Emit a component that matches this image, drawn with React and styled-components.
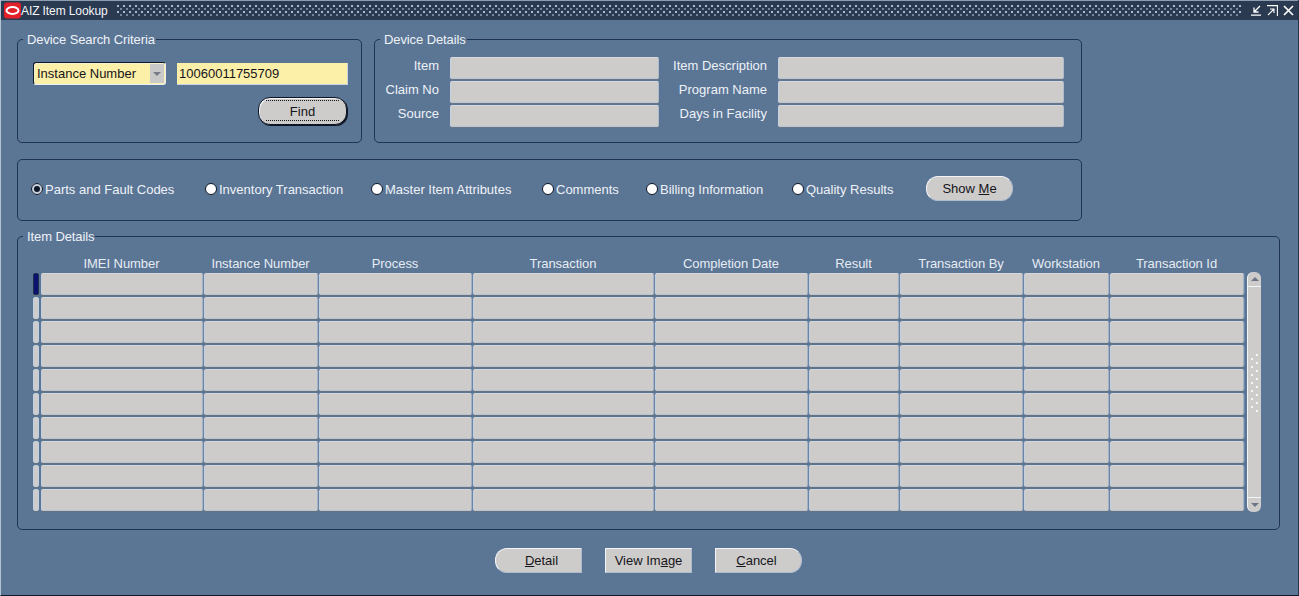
import React from 'react';
import styled, { createGlobalStyle } from 'styled-components';

const GlobalStyle = createGlobalStyle`
  html, body {
    margin: 0;
    padding: 0;
    background: #5b7595;
  }
  body {
    font-family: "Liberation Sans", Arial, sans-serif;
    font-size: 13px;
  }
`;

const Window = styled.div`
  box-sizing: border-box;
  width: 1299px;
  height: 596px;
  background: #5b7595;
  border-left: 1px solid #b4c2d4;
  border-right: 1px solid #24344c;
  border-bottom: 1px solid #0c1830;
  display: flex;
  flex-direction: column;
  overflow: hidden;
`;

const TitleBar = styled.div`
  height: 20px;
  flex: none;
  background: #2a3a50;
  border-top: 1px solid #8f9db0;
  box-sizing: border-box;
  display: flex;
  align-items: center;
  color: #f4f6f9;
`;

const Logo = styled.svg`
  width: 17px;
  height: 17px;
  margin-left: 3px;
  flex: none;
`;

const Title = styled.span`
  font-size: 12px;
  letter-spacing: -0.1px;
  width: 96px;
  white-space: nowrap;
`;

const Dots = styled.div`
  width: 1124px;
  height: 13px;
  background-image:
    radial-gradient(circle at 1px 1px, #aebcd0 0.7px, transparent 1px),
    radial-gradient(circle at 1px 1px, #76889f 0.7px, transparent 1px);
  background-size: 6px 6px;
  background-position: 0 1px, 3px 4px;
`;

const WindowIcons = styled.div`
  display: flex;
  gap: 5px;
  margin-left: 10px;
  align-items: center;
`;

const Content = styled.div`
  padding: 19px 0 0 16px;
  display: flex;
  flex-direction: column;
  align-items: flex-start;
`;

const TopRow = styled.div`
  display: flex;
  gap: 12px;
`;

const Panel = styled.section`
  position: relative;
  box-sizing: border-box;
  width: ${(p) => p.$width}px;
  height: ${(p) => p.$height}px;
  border: 1px solid #1f3450;
  border-radius: 5px;
  margin-top: ${(p) => p.$top || 0}px;
`;

const Legend = styled.span`
  position: absolute;
  top: -8px;
  left: 5px;
  padding: 0 1px 0 4px;
  background: #5b7595;
  color: #eef2f7;
  letter-spacing: -0.1px;
  line-height: 15px;
  white-space: nowrap;
`;

const SearchBody = styled.div`
  padding: 22px 14px 0 15px;
  display: flex;
  flex-direction: column;
  align-items: flex-end;
`;

const SearchRow = styled.div`
  display: flex;
  gap: 11px;
  align-self: stretch;
  align-items: flex-end;
`;

const Select = styled.div`
  box-sizing: border-box;
  flex: none;
  width: 133px;
  height: 23px;
  background: #fcefa8;
  border: 1px solid #e8eef5;
  border-top-color: #0f1c30;
  border-left-color: #0f1c30;
  border-radius: 3px;
  display: flex;
  align-items: center;
  padding-left: 3px;
  color: #15151a;
  box-shadow: inset 1px 1px 0 #f6f0cc;
`;

const SelectText = styled.span`
  flex: 1;
`;

const SelectArrow = styled.span`
  width: 14px;
  height: 19px;
  margin-right: 1px;
  background: #c9c9c9;
  display: flex;
  align-items: center;
  justify-content: center;
  &::before {
    content: '';
    border-left: 4px solid transparent;
    border-right: 4px solid transparent;
    border-top: 4px solid #767c86;
  }
`;

const TextInput = styled.div`
  box-sizing: border-box;
  flex: none;
  width: 171px;
  height: 22px;
  padding-left: 2px;
  background: #fcefa8;
  border-right: 1px solid #c6d2e0;
  border-bottom: 1px solid #c6d2e0;
  color: #15151a;
  line-height: 21px;
`;

const Button = styled.div`
  box-sizing: border-box;
  width: ${(p) => p.$width || 87}px;
  height: ${(p) => p.$height || 25}px;
  padding: ${(p) => p.$pad || '0'};
  display: flex;
  align-items: center;
  justify-content: center;
  background: #cdcccb;
  color: #15151a;
  border-top: 1px solid #f2f4f7;
  border-left: 1px solid #f2f4f7;
  border-bottom: 1px solid #aebccd;
  border-right: 1px solid #aebccd;
  border-radius: ${(p) => p.$radius || '12px'};
`;

const FindButton = styled(Button)`
  position: relative;
  margin-top: 12px;
  border: 1px solid #0e1422;
  border-radius: 12px;
  box-shadow: 1px 1px 0 #0e1422, inset 1px 1px 0 #f2f4f7;
  &::after {
    content: '';
    position: absolute;
    inset: 2px 7px 3px;
    border-top: 1px dotted #15151a;
    border-bottom: 1px dotted #15151a;
  }
`;

const DetailsGrid = styled.div`
  padding-top: 17px;
  display: grid;
  grid-template-columns: 64px 209px 97px 286px;
  grid-auto-rows: 22px;
  column-gap: 11px;
  row-gap: 2px;
`;

const FieldLabel = styled.label`
  color: #eef2f7;
  text-align: right;
  line-height: 17px;
  white-space: nowrap;
`;

const ReadField = styled.div`
  background: #cdcccb;
  border-top: 1px solid #d8d8d8;
  border-left: 1px solid #c6d2e0;
  border-right: 1px solid #aebccd;
  border-bottom: 1px solid #b7c5d6;
  border-radius: 2px;
  box-sizing: border-box;
  box-shadow: 0 1px 0 #6d7686;
`;

const RadioGrid = styled.div`
  display: grid;
  grid-template-columns: 174px 166px 171px 104px 146px 134px 87px;
  height: 100%;
  padding-left: 13px;
  align-items: center;
  box-sizing: border-box;
  padding-bottom: 4px;
`;

const RadioItem = styled.div`
  display: flex;
  align-items: center;
  color: #eef2f7;
  white-space: nowrap;
  padding-top: 2px;
`;

const RadioDot = styled.span`
  box-sizing: border-box;
  width: 12px;
  height: 12px;
  margin-right: 2px;
  border-radius: 50%;
  background: ${(p) => (p.$checked ? '#0c1626' : '#ffffff')};
  border: ${(p) => (p.$checked ? '3px solid #c6cfda' : '1px solid #0c1626')};
  outline: ${(p) => (p.$checked ? '1px solid #0c1626' : 'none')};
  outline-offset: -1px;
`;

const TableWrap = styled.div`
  display: flex;
  padding: 18px 0 0 15px;
`;

const TableGrid = styled.div`
  display: grid;
  grid-template-columns: 7px 162px 114px 153px 181px 153px 90px 123px 85px 134px;
  grid-template-rows: 16px repeat(10, 22px);
  column-gap: 1px;
  row-gap: 2px;
`;

const HeaderCell = styled.div`
  color: #e6ecf3;
  text-align: center;
  letter-spacing: -0.05px;
  line-height: 17px;
  padding-right: 1px;
  white-space: nowrap;
`;

const Cell = styled.div`
  box-sizing: border-box;
  background: #cdcccb;
  border-top: 1px solid #d6d6d6;
  border-left: 1px solid #c3d0df;
  border-right: 1px solid #a3b2c5;
  border-bottom: 1px solid #b7c5d6;
  border-radius: 2px;
  box-shadow: 0 1px 0 #67727f, 1px 0 0 #6d85a5;
`;

const RowMark = styled.div`
  box-sizing: border-box;
  margin-right: 1px;
  background: ${(p) => (p.$active ? '#0a1470' : '#cdcccb')};
  border: 1px solid ${(p) => (p.$active ? '#22304e' : '#c3d0df')};
  border-radius: 2px;
  box-shadow: 0 1px 0 #67727f;
`;

const Scrollbar = styled.div`
  width: 14px;
  height: 240px;
  margin-left: 3px;
  margin-top: 17px;
  background: #cdcccb;
  border-left: 1px solid #f2f4f7;
  border-radius: 6px;
  box-sizing: border-box;
  display: flex;
  flex-direction: column;
  justify-content: space-between;
  align-items: stretch;
`;

const ScrollEnd = styled.div`
  height: 14px;
  display: flex;
  align-items: center;
  justify-content: center;
  border-${(p) => (p.$down ? 'top' : 'bottom')}: 1px solid #f2f4f7;
  &::before {
    content: '';
    border-left: 4px solid transparent;
    border-right: 4px solid transparent;
    border-${(p) => (p.$down ? 'top' : 'bottom')}: 4px solid #6d7686;
  }
`;

const ScrollGrip = styled.div`
  width: 8px;
  height: 60px;
  margin: 0 0 16px 3px;
  background-image:
    radial-gradient(circle at 1px 1px, #f4f6f9 1px, transparent 1.2px),
    radial-gradient(circle at 1px 1px, #f4f6f9 1px, transparent 1.2px);
  background-size: 10px 8px;
  background-position: 0 4px, 5px 0;
`;

const ButtonRow = styled.div`
  display: flex;
  gap: 23px;
  margin: 18px 0 0 478px;
`;

const columns = [
  'IMEI Number',
  'Instance Number',
  'Process',
  'Transaction',
  'Completion Date',
  'Result',
  'Transaction By',
  'Workstation',
  'Transaction Id',
];

const radios = [
  'Parts and Fault Codes',
  'Inventory Transaction',
  'Master Item Attributes',
  'Comments',
  'Billing Information',
  'Quality Results',
];

const rows = Array.from({ length: 10 }, (_, i) => i);

const details = [
  ['Item', 'Item Description'],
  ['Claim No', 'Program Name'],
  ['Source', 'Days in Facility'],
];

export default function App() {
  return (
    <>
      <GlobalStyle />
      <Window>
        <TitleBar>
          <Logo viewBox="0 0 17 17">
            <rect x="0" y="0.5" width="17" height="16" rx="3" fill="#e3202a" />
            <ellipse cx="8.5" cy="8.5" rx="6" ry="3.5" fill="none" stroke="#fff" strokeWidth="2" />
          </Logo>
          <Title>AIZ Item Lookup</Title>
          <Dots />
          <WindowIcons>
            <svg width="11" height="11" viewBox="0 0 11 11" fill="none" stroke="#fff" strokeWidth="1.3">
              <path d="M0 10.2h10M9 1L3.5 6.5M3 2.5v4.5h4.5" />
            </svg>
            <svg width="11" height="11" viewBox="0 0 11 11" fill="none" stroke="#fff" strokeWidth="1.1">
              <path d="M0 .6h10.4V11M1 10l5.5-5.5M3 4h4v4" />
            </svg>
            <svg width="11" height="11" viewBox="0 0 11 11" fill="none" stroke="#fff" strokeWidth="1.7">
              <path d="M1 1l9 9M10 1l-9 9" />
            </svg>
          </WindowIcons>
        </TitleBar>
        <Content>
          <TopRow>
            <Panel $width={345} $height={104}>
              <Legend>Device Search Criteria</Legend>
              <SearchBody>
                <SearchRow>
                  <Select>
                    <SelectText>Instance Number</SelectText>
                    <SelectArrow />
                  </Select>
                  <TextInput>10060011755709</TextInput>
                </SearchRow>
                <FindButton $width={89} $height={28}>Find</FindButton>
              </SearchBody>
            </Panel>
            <Panel $width={708} $height={104}>
              <Legend>Device Details</Legend>
              <DetailsGrid>
                {details.map(([left, right]) => (
                  <React.Fragment key={left}>
                    <FieldLabel>{left}</FieldLabel>
                    <ReadField />
                    <FieldLabel>{right}</FieldLabel>
                    <ReadField />
                  </React.Fragment>
                ))}
              </DetailsGrid>
            </Panel>
          </TopRow>
          <Panel $width={1065} $height={62} $top={16}>
            <RadioGrid>
              {radios.map((label, i) => (
                <RadioItem key={label}>
                  <RadioDot $checked={i === 0} />
                  {label}
                </RadioItem>
              ))}
              <Button $width={87} $height={25}>
                <span>Show <u>M</u>e</span>
              </Button>
            </RadioGrid>
          </Panel>
          <Panel $width={1263} $height={294} $top={15}>
            <Legend>Item Details</Legend>
            <TableWrap>
              <TableGrid>
                <span />
                {columns.map((c) => (
                  <HeaderCell key={c}>{c}</HeaderCell>
                ))}
                {rows.map((r) => (
                  <React.Fragment key={r}>
                    <RowMark $active={r === 0} />
                    {columns.map((c) => (
                      <Cell key={c} />
                    ))}
                  </React.Fragment>
                ))}
              </TableGrid>
              <Scrollbar>
                <ScrollEnd />
                <ScrollGrip />
                <ScrollEnd $down />
              </Scrollbar>
            </TableWrap>
          </Panel>
          <ButtonRow>
            <Button $radius="12px 0 0 12px" $pad="0 0 0 6px"><span><u>D</u>etail</span></Button>
            <Button $radius="0"><span>View Im<u>a</u>ge</span></Button>
            <Button $radius="0 12px 12px 0" $pad="0 4px 0 0"><span><u>C</u>ancel</span></Button>
          </ButtonRow>
        </Content>
      </Window>
    </>
  );
}
